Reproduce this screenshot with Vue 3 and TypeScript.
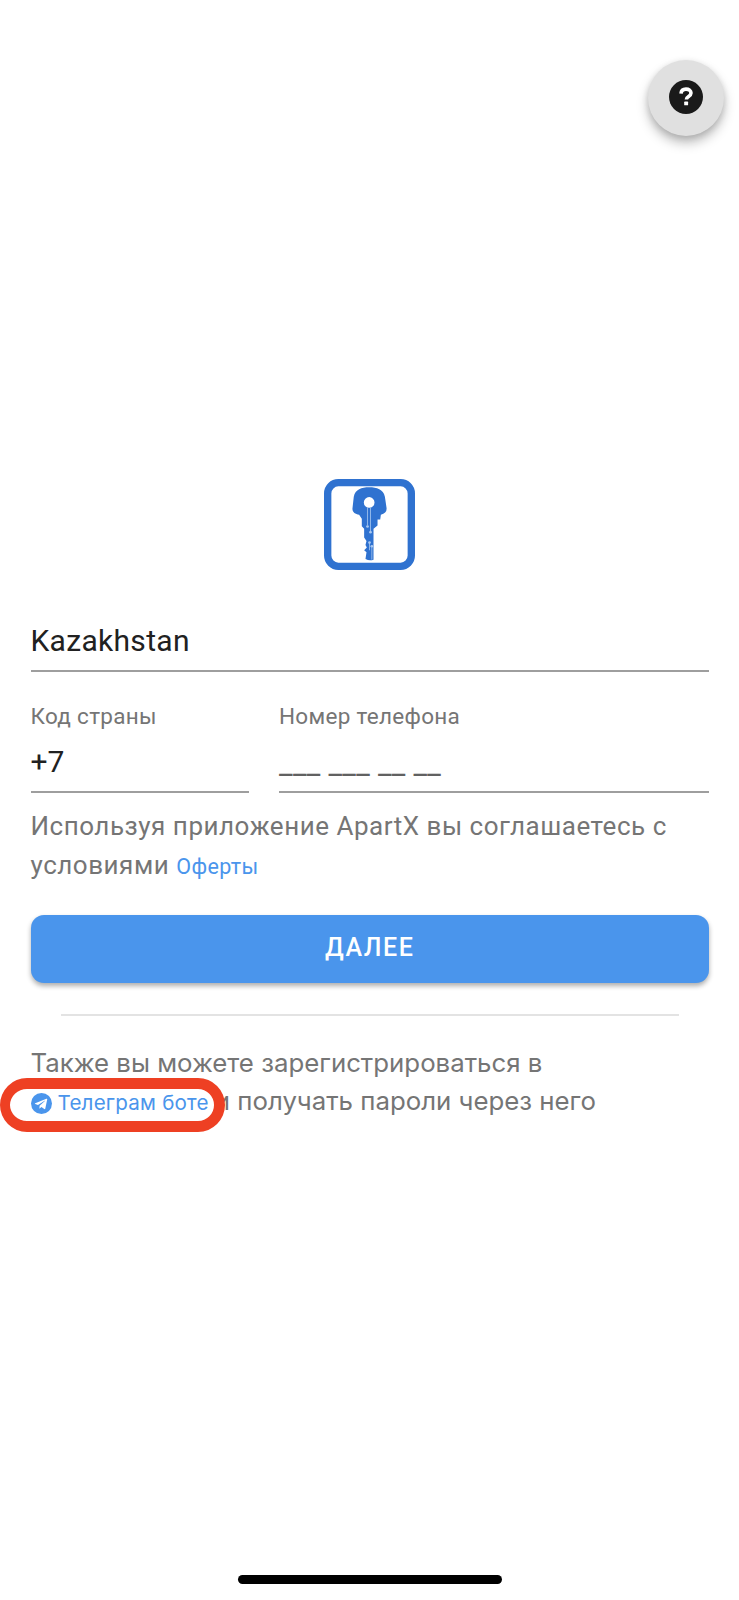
<script setup lang="ts">
const title: string = 'Kazakhstan'
</script>

<template>
  <div class="page">
    <button class="fab" type="button" aria-label="Помощь">
      <svg width="34" height="34" viewBox="0 0 34 34">
        <circle cx="17" cy="17" r="17" fill="#1a1a1a" />
        <path d="M12 13.6c.2-3 2.3-4.5 5-4.5 2.9 0 5 1.6 5 4 0 3.5-4.6 3.2-4.6 6.3" fill="none" stroke="#fff" stroke-width="3.6" />
        <rect x="15.2" y="21.6" width="3.9" height="3.7" rx=".6" fill="#fff" />
      </svg>
    </button>

    <main class="content">
      <div class="logo">
        <svg width="91" height="91" viewBox="102 87 272 272">
          <rect x="113" y="98" width="250" height="250" rx="32" fill="none" stroke="#2f72d0" stroke-width="22" />
          <path fill="#2f72d0" fill-rule="evenodd" d="M237 112C214 112 196 118 191 140L187 176C187 187 196 192 207 194L215 206V228L222 236V262L229 272L226 284L230 292L222 300L229 306L226 326Q238 333 250 328V236L262 226V208H270L272 194C284 191 290 185 289 174L284 140C279 118 260 112 237 112ZM237 141A16 16 0 1 0 237 173A16 16 0 1 0 237 141Z" />
          <path fill="none" stroke="#a9c8f0" stroke-width="2.4" d="M232 173V226M241 173V243M238 278V300M245 290V328" />
          <circle cx="232" cy="229" r="4" fill="#a9c8f0" />
          <circle cx="241" cy="246" r="4" fill="#a9c8f0" />
          <circle cx="238" cy="277" r="4" fill="#a9c8f0" />
          <circle cx="245" cy="288" r="4" fill="#a9c8f0" />
        </svg>
      </div>

      <div class="field country">{{ title }}</div>

      <div class="phone-row">
        <div class="field-col code">
          <div class="label">Код страны</div>
          <div class="value">+7</div>
        </div>
        <div class="field-col number">
          <div class="label">Номер телефона</div>
          <div class="value placeholder">___ ___ __ __</div>
        </div>
      </div>

      <p class="terms">Используя приложение ApartX вы соглашаетесь с условиями <a class="link small">Оферты</a></p>

      <button class="next" type="button">ДАЛЕЕ</button>

      <div class="divider"></div>

      <p class="bot">
        Также вы можете зарегистрироваться в<br />
        <svg class="tg" width="21" height="21" viewBox="0 0 21 21">
          <circle cx="10.5" cy="10.5" r="10.5" fill="#4a95ec" />
          <path fill="#fff" d="M4.2 10.2 15.4 5.7c.5-.2 1 .1.8.9l-1.9 8.9c-.1.6-.5.8-1 .5l-2.9-2.1-1.4 1.4c-.2.2-.3.3-.6.3l.2-2.9 5.3-4.8c.2-.2 0-.3-.3-.1L7 11.9 4.2 11c-.6-.2-.6-.6 0-.8z" />
        </svg><a class="link bot-link">Телеграм боте</a>
        <span class="bot-rest">и получать пароли через него</span>
        <span class="annotation" aria-hidden="true"></span>
      </p>
    </main>

    <div class="home-bar"></div>
  </div>
</template>

<style>
html, body { margin: 0; background: #fff; }
</style>

<style scoped>
.page {
  position: relative;
  width: 739px;
  height: 1600px;
  overflow: hidden;
  background: #fff;
  font-family: Roboto, "Noto Sans", sans-serif;
}
.fab {
  position: absolute;
  left: 648px;
  top: 60px;
  width: 76px;
  height: 76px;
  padding: 0;
  border: 0;
  border-radius: 50%;
  background: #e0e0e0;
  box-shadow: 0 7px 12px rgba(0, 0, 0, .26), 0 2px 6px rgba(0, 0, 0, .12);
  display: flex;
  align-items: center;
  justify-content: center;
}
.fab svg { margin-bottom: 2px; }
.content {
  display: flex;
  flex-direction: column;
  padding: 479px 30px 0 30.5px;
}
.logo { display: flex; justify-content: center; height: 91px; }
.field.country {
  margin-top: 40px;
  height: 62px;
  line-height: 61px;
  box-sizing: border-box;
  border-bottom: 2px solid #9e9e9e;
  font-size: 30px;
  letter-spacing: .3px;
  color: #212121;
}
.phone-row { display: flex; gap: 30px; margin-top: 19px; }
.field-col { border-bottom: 2px solid #9e9e9e; box-sizing: border-box; height: 102px; }
.code { width: 218.5px; }
.number { flex: 1; }
.label {
  height: 32px;
  padding-top: 9px;
  line-height: 32px;
  font-size: 22.5px;
  letter-spacing: .3px;
  color: #757575;
}
.value {
  height: 59px;
  line-height: 59px;
  font-size: 30px;
  color: #212121;
}
.placeholder { color: #616161; line-height: 64px; letter-spacing: .35px; }
.terms {
  margin: 14px 0 0;
  font-size: 26px;
  line-height: 38.5px;
  letter-spacing: .52px;
  color: #757575;
}
.link { color: #4a95ec; }
.small { font-size: 21.5px; letter-spacing: .4px; }
.next {
  margin-top: 29px;
  height: 68px;
  padding: 0 0 3px;
  border: 0;
  border-radius: 13px;
  background: #4a95ec;
  color: #fff;
  font-family: inherit;
  font-size: 25px;
  font-weight: 500;
  letter-spacing: 1.6px;
  box-shadow: 0 3px 5px rgba(0, 0, 0, .32);
}
.divider { margin: 31px 30px 0; height: 2px; background: #e3e3e3; }
.bot {
  position: relative;
  margin: 28px 0 0;
  font-family: Inter, Roboto, sans-serif;
  font-size: 25.8px;
  line-height: 38px;
  color: #757575;
}
.tg { vertical-align: -4px; margin-right: 6px; }
.bot-link { font-size: 20.6px; line-height: 1; letter-spacing: .2px; }
.bot-rest { margin-left: 6px; }
.annotation {
  position: absolute;
  left: -30.5px;
  top: 34px;
  width: 225px;
  height: 54px;
  box-sizing: border-box;
  border: 11px solid #ee4023;
  border-left-width: 10px;
  border-radius: 27px;
}
.home-bar {
  position: absolute;
  left: 238px;
  top: 1575px;
  width: 264px;
  height: 9px;
  border-radius: 5px;
  background: #000;
}
</style>
